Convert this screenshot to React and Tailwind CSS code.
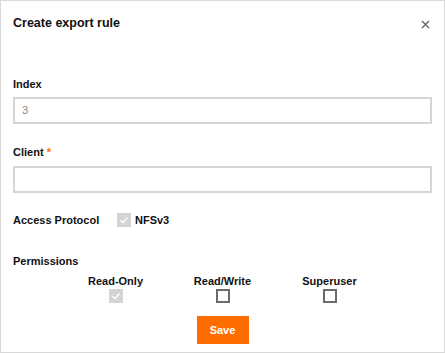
import React from 'react';

const Check = ({ checked, disabled }) => (
  <span
    className={`flex items-center justify-center w-[14px] h-[14px] ${
      disabled ? 'bg-[#d4d4d4]' : 'border-2 border-[#6b6b6b] bg-white'
    }`}
  >
    {checked && (
      <svg width="10" height="10" viewBox="0 0 10 10">
        <path d="M1.5 5.2 L4 7.5 L8.5 2.5" stroke="#ffffff" strokeWidth="1.4" fill="none" />
      </svg>
    )}
  </span>
);

const App = () => {
  return (
    <div className="w-[445px] h-[353px] border border-[#d9d9d9] bg-white text-[#111] font-['Liberation_Sans',Arial,sans-serif] px-[12px] relative">
      {/* Header */}
      <div className="flex items-center justify-between pt-[14px]">
        <h1 className="text-[12.5px] font-bold leading-[16px]">Create export rule</h1>
        <button className="text-[#666] mt-[2px] mr-[2px]">
          <svg width="9" height="9" viewBox="0 0 9 9">
            <path d="M1 1 L8 8 M8 1 L1 8" stroke="#666" strokeWidth="1.4" />
          </svg>
        </button>
      </div>

      {/* Index */}
      <label className="block text-[11px] font-bold leading-[14px] mt-[46px]">Index</label>
      <div className="mt-[6px] h-[27px] border-2 border-[#d6d6d6] flex items-center px-[7px] text-[11px] text-[#888]">
        3
      </div>

      {/* Client */}
      <label className="block text-[11px] font-bold leading-[14px] mt-[21px]">
        Client <span className="text-[#ff6d00]">*</span>
      </label>
      <div className="mt-[7px] h-[27px] border-2 border-[#d6d6d6]"></div>

      {/* Access protocol */}
      <div className="flex items-center mt-[20px] h-[14px]">
        <span className="text-[11px] font-bold w-[104px]">Access Protocol</span>
        <Check checked disabled />
        <span className="text-[11px] font-bold ml-[4px]">NFSv3</span>
      </div>

      {/* Permissions */}
      <div className="text-[11px] font-bold leading-[14px] mt-[27px]">Permissions</div>
      <div className="flex justify-center mt-[7px]">
        {[
          { label: 'Read-Only', checked: true, disabled: true },
          { label: 'Read/Write' },
          { label: 'Superuser' },
        ].map((p) => (
          <div key={p.label} className="w-[107px] flex flex-col items-center">
            <span className="text-[11px] font-bold leading-[13px]">{p.label}</span>
            <div className="mt-[1px]">
              <Check checked={p.checked} disabled={p.disabled} />
            </div>
          </div>
        ))}
      </div>

      {/* Save */}
      <div className="flex justify-center mt-[13px]">
        <button className="w-[52px] h-[28px] bg-[#ff6d00] text-white text-[11px] font-bold">
          Save
        </button>
      </div>
    </div>
  );
};

export default App;
